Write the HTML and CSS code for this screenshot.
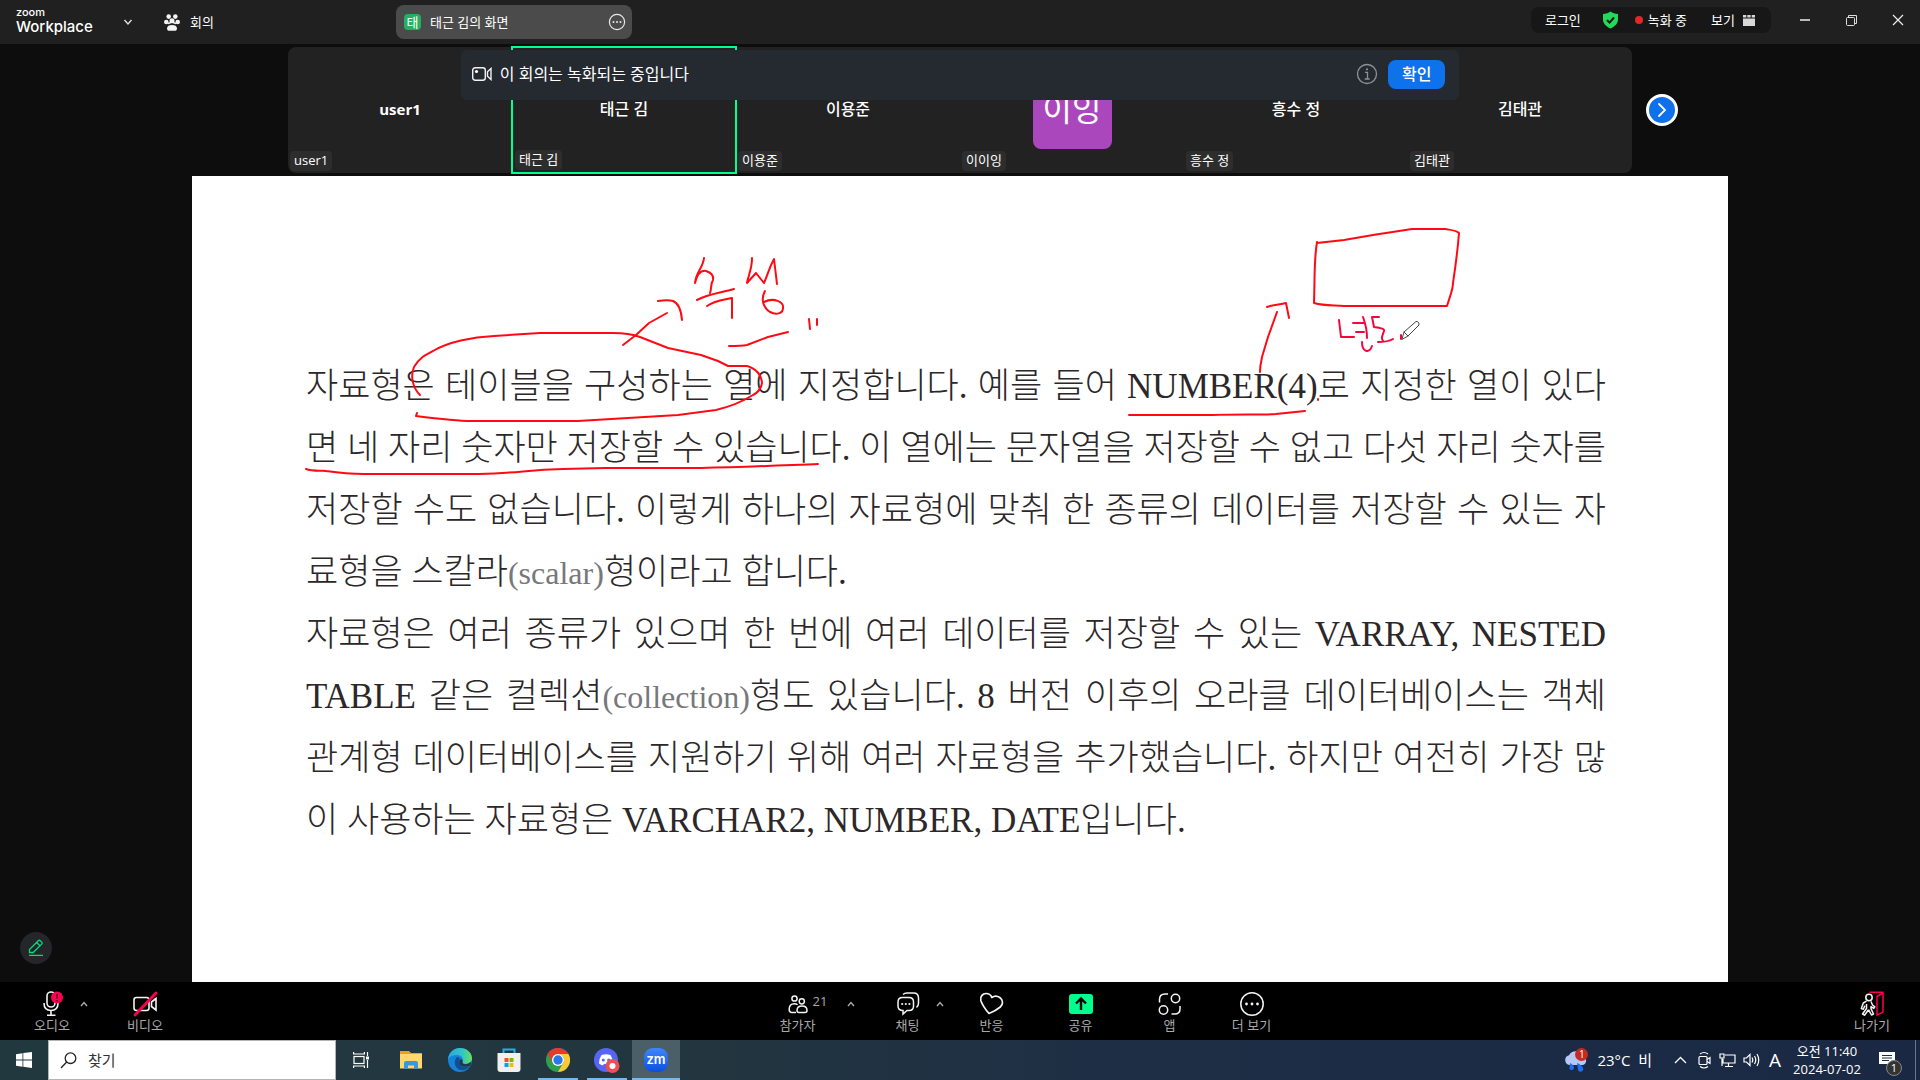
FILE: index.html
```html
<!DOCTYPE html>
<html lang="ko">
<head>
<meta charset="utf-8">
<meta name="viewport" content="width=device-width, initial-scale=1">
<title>Zoom Workplace</title>
<link rel="stylesheet" href="styles.css">
</head>
<body>
<div class="app">
  <header class="titlebar">
    <div class="brand"><span class="brand-top">zoom</span><span class="brand-name">Workplace</span></div>
    <button class="icon-btn brand-menu" aria-label="메뉴"><svg width="10" height="8" viewBox="0 0 10 8"><path d="M1.500 2l3.500 4 3.500-4" fill="none" stroke="#ddd" stroke-width="1.400"/></svg></button>
    <button class="meeting-btn">
      <svg width="16" height="17" viewBox="0 0 16 17" fill="#f4f4f4"><circle cx="4.700" cy="2.600" r="2.300"/><circle cx="11.300" cy="2.600" r="2.300"/><circle cx="2.300" cy="8" r="2.300"/><circle cx="13.700" cy="8" r="2.300"/><circle cx="8" cy="6.800" r="2.500"/><path d="M3 14.500c0-2.500 2.200-3.500 5-3.500s5 1 5 3.500c0 1.500-1 2.300-2.300 2.300H5.300C4 16.800 3 16 3 14.500z"/><path d="M4 9.500l3-1M12 9.500l-3-1" stroke="#f4f4f4" stroke-width="1.500"/></svg>
      회의
    </button>
    <div class="share-pill">
      <span class="share-badge">태</span>
      <span class="share-title">태근 김의 화면</span>
      <button class="icon-btn" aria-label="더 보기"><svg width="18" height="18" viewBox="0 0 18 18"><circle cx="9" cy="9" r="7.600" fill="none" stroke="#e8e8e8" stroke-width="1.200"/><g fill="#e8e8e8"><circle cx="5.500" cy="9" r="1"/><circle cx="9" cy="9" r="1"/><circle cx="12.500" cy="9" r="1"/></g></svg></button>
    </div>
    <div class="status-pill">
      <button class="text-btn">로그인</button>
      <svg class="shield" width="17" height="18" viewBox="0 0 17 18"><path d="M8.500 0.500c2 1.700 4.500 2.400 7.500 2.500v5.500c0 4-3 7-7.500 9C4 15.500 1 12.500 1 8.500V3c3-.1 5.500-.8 7.500-2.500z" fill="#23d959"/><path d="M5 9l2.600 2.600L12 6.500" fill="none" stroke="#171717" stroke-width="2"/></svg>
      <span class="recording"><i class="rec-dot"></i>녹화 중</span>
      <button class="text-btn view-btn">보기
        <svg width="12" height="11" viewBox="0 0 12 11" fill="#d8d8d8"><path d="M0 0h3.300v2.500H0zM4.300 0h3.300v2.500H4.300zM8.700 0H12v2.500H8.700zM0 3.500h12V11H0z"/></svg>
      </button>
    </div>
    <div class="window-btns">
      <button class="icon-btn" aria-label="최소화"><svg width="12" height="12" viewBox="0 0 12 12"><path d="M1 6h10" stroke="#bbb" stroke-width="2"/></svg></button>
      <button class="icon-btn" aria-label="이전 크기로"><svg width="13" height="13" viewBox="0 0 13 13" fill="none" stroke="#ddd"><rect x="1.500" y="3.500" width="8" height="8" rx="1"/><path d="M3.500 3V1.500h8v8H10"/></svg></button>
      <button class="icon-btn" aria-label="닫기"><svg width="12" height="12" viewBox="0 0 12 12"><path d="M1 1l10 10M11 1L1 11" stroke="#eee" stroke-width="1.200"/></svg></button>
    </div>
  </header>

  <main class="stage">
    <section class="gallery">
      <div class="strip">
        <div class="tile"><strong>user1</strong><span class="tag">user1</span></div>
        <div class="tile tile-active"><b>태근 김</b><span class="tag">태근 김</span></div>
        <div class="tile"><b>이용준</b><span class="tag">이용준</span></div>
        <div class="tile"><span class="avatar">이잉</span><span class="tag">이이잉</span></div>
        <div class="tile"><b>흥수 정</b><span class="tag">흥수 정</span></div>
        <div class="tile"><b>김태관</b><span class="tag">김태관</span></div>
      </div>
      <button class="next-btn" aria-label="다음"><svg width="10" height="16" viewBox="0 0 10 16"><path d="M2 2l6 6-6 6" fill="none" stroke="#fff" stroke-width="1.800" stroke-linecap="round"/></svg></button>
    </section>

    <div class="banner" role="status">
      <svg width="20" height="14" viewBox="0 0 20 14" fill="none" stroke="#f2f2f2" stroke-width="1.400"><rect x="0.700" y="0.700" width="12.600" height="12.600" rx="2.500"/><path d="M15.500 4.800L19 1.500v11l-3.500-3.300z"/><circle cx="4.500" cy="4.500" r="1.600" fill="#fff" stroke="none"/></svg>
      <span class="banner-text">이 회의는 녹화되는 중입니다</span>
      <button class="icon-btn" aria-label="정보"><svg width="22" height="22" viewBox="0 0 22 22" fill="none" stroke="#8d9197" stroke-width="1.300"><circle cx="11" cy="11" r="9.500"/><path d="M9 9.300h2.500V16M8.700 16h5"/><circle cx="11" cy="6.300" r="1.100" fill="#8d9197" stroke="none"/></svg></button>
      <button class="confirm">확인</button>
    </div>

    <article class="slide">
      <p>
        <span class="line">자료형은 테이블을 구성하는 열에 지정합니다. 예를 들어 NUMBER(4)로 지정한 열이 있다</span>
        <span class="line">면 네 자리 숫자만 저장할 수 있습니다. 이 열에는 문자열을 저장할 수 없고 다섯 자리 숫자를</span>
        <span class="line">저장할 수도 없습니다. 이렇게 하나의 자료형에 맞춰 한 종류의 데이터를 저장할 수 있는 자</span>
        <span class="line line-end">료형을 스칼라<small>(scalar)</small>형이라고 합니다.</span>
      </p>
      <p>
        <span class="line">자료형은 여러 종류가 있으며 한 번에 여러 데이터를 저장할 수 있는 VARRAY, NESTED</span>
        <span class="line">TABLE 같은 컬렉션<small>(collection)</small>형도 있습니다. 8 버전 이후의 오라클 데이터베이스는 객체</span>
        <span class="line">관계형 데이터베이스를 지원하기 위해 여러 자료형을 추가했습니다. 하지만 여전히 가장 많</span>
        <span class="line line-end">이 사용하는 자료형은 VARCHAR2, NUMBER, DATE입니다.</span>
      </p>
      <svg class="ink" viewBox="192 176 1536 806" preserveAspectRatio="xMidYMin meet" aria-hidden="true">
        <path d="M420 395C413 388 410 377 414 367C420 357 427 354 433 351C448 342 472 337 494 336L540 333H613C622 333 632 334 640 337L668 348L701 355L718 361L728 366H747C754 368 761 373 762 383C761 390 757 393 753 395C740 403 729 407 716 410L678 415L578 421H471C457 421 440 419 416 416L417 413"/>
        <path d="M623 345L636 335L649 323L667 313M658 301C664 300 670 300 673 301C678 303 681 308 682 320"/>
        <path d="M704 258C703 268 696 272 695 283C697 275 701 270 706 271C712 273 714 276 713 280C710 285 712 288 710 293M697 300C708 294 720 293 734 289M707 306C716 300 724 300 732 298V318"/>
        <path d="M752 258C752 270 748 276 747 283L756 273L764 283C768 274 769 268 774 259L777 284M765 291C760 300 764 308 770 312C776 315 783 314 783 308C784 302 774 297 764 302"/>
        <path d="M729 346C737 346 742 346 747 345L768 337L788 332M809 319L810 329M817 319V325"/>
        <path d="M306 469C314 472 324 470 326 471C340 473 350 474 364 474H479C520 473 525 470 563 469L605 468H701C750 467 790 465 818 464"/>
        <path d="M1317 242C1314 260 1315 270 1314 303C1325 306 1333 305 1344 306H1447C1449 299 1453 290 1453 283C1456 263 1458 246 1459 233C1456 230 1450 230 1445 229H1412L1373 235L1344 240L1317 243"/>
        <path d="M1260 372C1260 363 1262 360 1262 357L1268 337L1277 312M1267 307C1275 304 1280 305 1286 303L1289 318"/>
        <path d="M1129 415H1212C1240 414 1258 415 1276 414L1305 411M1318 399V400"/>
        <path class="ink-pink" d="M1339 320L1341 337H1354M1353 323H1364M1356 332H1364M1363 317C1366 325 1367 330 1367 338M1362 342C1362 352 1369 354 1372 346M1379 317H1372L1374 327C1381 328 1385 329 1384 331C1382 337 1381 338 1383 341M1378 342C1384 342 1388 342 1393 339M1401 335V339"/>
        <path class="cursor" d="M1402 339L1404 332L1416 321.500Q1419 321 1419 325L1408 336ZM1404 332L1408 336"/>
      </svg>
    </article>

    <button class="annotate" aria-label="주석"><svg width="16" height="18" viewBox="0 0 16 18" fill="none" stroke="#0bd97e" stroke-width="1.300"><path d="M1.500 10.500l8.800-8.800q1-.9 2 0l1.400 1.400q.9 1 0 2L5.200 13.500H1.500zM8.700 3.500l3.300 3.300M1 16.300h14"/></svg></button>
  </main>

  <nav class="toolbar">
    <div class="tools tools-left">
      <button class="tool"><svg width="22" height="26" viewBox="0 0 22 26" fill="none" stroke="#f4f4f4" stroke-width="1.600"><rect x="6" y="1" width="8" height="15" rx="4"/><path d="M3 12c0 5 3 7.500 7 7.500s7-2.500 7-7.500M10 19.500V24M6 24.200h8.500"/><circle cx="16" cy="6.500" r="6" fill="#ff0050" stroke="none"/><path d="M16 3v4.500M16 9v1.500" stroke="#40001a" stroke-width="1.500"/></svg>오디오</button>
      <button class="caret" aria-label="오디오 옵션"><svg width="8" height="6" viewBox="0 0 8 6"><path d="M1 5l3-3.500L7 5" fill="none" stroke="#aaa" stroke-width="1.400"/></svg></button>
      <button class="tool tool-video"><svg width="26" height="26" viewBox="0 0 26 26" fill="none" stroke="#f4f4f4" stroke-width="1.600"><rect x="2" y="6.500" width="15" height="13" rx="2.500"/><path d="M24 7.500v11.500l-4.500-3.500v-4.500z"/><path d="M3 24L24 2" stroke="#ff0050" stroke-width="2.800" stroke-linecap="round"/></svg>비디오</button>
    </div>
    <div class="tools tools-mid">
      <button class="tool"><svg width="20" height="26" viewBox="0 0 20 26" fill="none" stroke="#f4f4f4" stroke-width="1.500"><circle cx="6.500" cy="7.500" r="2.600"/><circle cx="13.800" cy="10.300" r="2.600"/><path d="M8 21.500H3.500C1.500 21.500 1.200 20 1.200 18c0-3.500 2-5.300 5-5.300 1.500 0 2.600.3 3.400 1M14 15c3.500 0 5 2 5 4.500 0 1.500-.7 2-2 2h-6c-1.300 0-2-.5-2-2C9 17 10.500 15 14 15z"/></svg>참가자<span class="count">21</span></button>
      <button class="caret caret-far" aria-label="참가자 옵션"><svg width="8" height="6" viewBox="0 0 8 6"><path d="M1 5l3-3.500L7 5" fill="none" stroke="#aaa" stroke-width="1.400"/></svg></button>
      <button class="tool tool-chat"><svg width="24" height="26" viewBox="0 0 24 26" fill="none" stroke="#f4f4f4" stroke-width="1.500"><path d="M7 3.500Q8.500 2 11 2h6.500Q22.500 2 22.500 7v5q0 3-2 4.500"/><path d="M6.500 6.500h6.500q4.500 0 4.500 4.500v4q0 4.500-4.500 4.500h-2l-4 3.500v-3.500q-5 0-5-4.500v-4q0-4.500 4.500-4.500z"/><g fill="#f4f4f4" stroke="none"><circle cx="6.200" cy="13" r="1.100"/><circle cx="9.800" cy="13" r="1.100"/><circle cx="13.400" cy="13" r="1.100"/></g></svg>채팅</button>
      <button class="caret" aria-label="채팅 옵션"><svg width="8" height="6" viewBox="0 0 8 6"><path d="M1 5l3-3.500L7 5" fill="none" stroke="#aaa" stroke-width="1.400"/></svg></button>
      <button class="tool tool-react"><svg width="26" height="26" viewBox="0 0 26 26" fill="none" stroke="#f4f4f4" stroke-width="1.700" stroke-linejoin="round"><path d="M10 22.500C6 18 3 13 1.800 9.500.8 5 4 2.500 7 2.500c3.300 0 5 1.500 5.800 4 2.500-1.700 5.500-1.700 8 0 3.500 2.500 3.500 7 .5 9.500-3 2.500-7 4.800-11.300 6.500z"/></svg>반응</button>
      <button class="tool tool-gap"><svg width="24" height="26" viewBox="0 0 24 26"><rect y="3" width="24" height="20" rx="3" fill="#00ff8c"/><path d="M12 19V8M7 12.500L12 7.500l5 5" fill="none" stroke="#000" stroke-width="2.400"/></svg>공유</button>
      <button class="tool tool-gap"><svg width="24" height="26" viewBox="0 0 24 26" fill="none" stroke="#f4f4f4" stroke-width="1.500"><circle cx="17.500" cy="7.500" r="4.200"/><circle cx="5.500" cy="19" r="4.200"/><path d="M1.500 11.500V8.500Q1.500 3 7 3h3M22 15v3q0 5-5.500 5h-3"/></svg>앱</button>
      <button class="tool tool-more"><svg width="26" height="26" viewBox="0 0 26 26"><circle cx="13" cy="13" r="11.200" fill="none" stroke="#f4f4f4" stroke-width="1.500"/><g fill="#f4f4f4"><circle cx="7.500" cy="13" r="1.400"/><circle cx="13" cy="13" r="1.400"/><circle cx="18.500" cy="13" r="1.400"/></g></svg>더 보기</button>
    </div>
    <div class="tools">
      <button class="tool"><svg width="24" height="26" viewBox="0 0 24 26" fill="none" stroke="#f4f4f4" stroke-width="1.500" stroke-linejoin="round"><circle cx="9" cy="6.500" r="3.200"/><path d="M6.500 10.200L3.300 12 1.300 17.500l2 .8 1.500-3.500M6.500 13v4.500L2.500 23l2 1.200 4-5.500M11 10.500l1.500 3.500 2.300 1.800-1 1.600-2.800-1.800v2L13.500 23l-2 1-3-5.300"/><path d="M9.500 1.200H23v20l-6 3V5.500l6-3.500" stroke="#ff0050"/></svg>나가기</button>
    </div>
  </nav>

  <footer class="taskbar">
    <button class="task start" aria-label="시작"><svg width="16" height="16" viewBox="0 0 16 16" fill="#fff"><path d="M0 2.200l6.500-1v6.300H0zM7.300 1L16 0v7.500H7.300zM0 8.400h6.500v6.400l-6.500-1zM7.300 8.400H16V16l-8.700-1.200z"/></svg></button>
    <label class="search"><svg width="17" height="17" viewBox="0 0 17 17" fill="none" stroke="#222" stroke-width="1.300"><circle cx="10.500" cy="6.200" r="5.300"/><path d="M6.700 10L1 16"/></svg><input type="text" aria-label="찾기" placeholder="찾기"></label>
    <button class="task task-view" aria-label="작업 보기"><svg width="17" height="16" viewBox="0 0 17 16" fill="none" stroke="#fff" stroke-width="1.200"><rect x="1" y="4.500" width="10" height="7"/><path d="M.6 0v2h10.800V0M.6 16v-2h10.800v2M14.500 0v4M14.500 8v8"/><path d="M13 4.500h3v3h-3z" fill="#fff" stroke="none"/></svg></button>
    <div class="pinned">
      <button class="task" aria-label="파일 탐색기"><svg width="22" height="20" viewBox="0 0 22 20"><path d="M0 1h9l2 2h11v15H0z" fill="#e8a317"/><path d="M0 4h22v14.500H0z" fill="#ffd869"/><path d="M4 19v-6q0-2 2-2h10q2 0 2 2v6h-4v-3.500H8V19z" fill="#3a96dd"/></svg></button>
      <button class="task" aria-label="Edge"><svg width="24" height="24" viewBox="0 0 24 24"><defs><linearGradient id="e1" x1="0" x2="1"><stop stop-color="#2aa5e0"/><stop offset=".6" stop-color="#32c5c7"/><stop offset="1" stop-color="#6be052"/></linearGradient></defs><circle cx="12" cy="12" r="12" fill="#1583d8"/><path d="M0 11C1 4 6 0 12 0c7 0 12 5 12 10 0 4-3 6-6 6-2 0-4-.7-3.500-2C16 10 13 7 9 7 5 7 2 8.500 0 11z" fill="url(#e1)"/><path d="M9 9c-3 3-3 9 1 12 4 2.500 9 1 12-3-5 2.500-12 0-10.500-5 .5-2 .3-4-2.500-4z" fill="#0f4f93"/><path d="M14.500 14c-.5 1.500 1.500 2.500 4 2 2-.4 3.500-1.300 4.700-2.500l-.7 4c-3 2-9 1.500-11-1.500-.7-2 .5-4.500 1.500-5 1.300.5 2 1.500 1.500 3z" fill="#22373f"/></svg></button>
      <button class="task" aria-label="Microsoft Store"><svg width="24" height="24" viewBox="0 0 24 24"><path d="M6.500 7V1.500h11V7" fill="none" stroke="#22b1e6" stroke-width="2"/><path d="M.5 5h23v16q0 3-3 3h-17q-3 0-3-3z" fill="#f0f0f0"/><path d="M7.500 10h4v4h-4z" fill="#f25022"/><path d="M12.500 10h4v4h-4z" fill="#7fba00"/><path d="M7.500 15h4v4h-4z" fill="#00a4ef"/><path d="M12.500 15h4v4h-4z" fill="#ffb900"/></svg></button>
      <button class="task running" aria-label="Chrome"><svg width="24" height="24" viewBox="0 0 24 24"><circle cx="12" cy="12" r="12" fill="#2da04e"/><path d="M1.600 6A12 12 0 0 1 22.400 6H12a6 6 0 0 0-5.200 9z" fill="#e33b2e"/><path d="M22.400 6A12 12 0 0 1 12 24l5.200-9A6 6 0 0 0 12 6z" fill="#fcc934"/><circle cx="12" cy="12" r="6" fill="#fff"/><circle cx="12" cy="12" r="4.700" fill="#2878eb"/></svg></button>
      <button class="task running" aria-label="Discord"><svg width="26" height="26" viewBox="0 0 26 26"><circle cx="12" cy="13" r="12" fill="#5865f2"/><path d="M7.500 8Q12 6.500 16.500 8q2.500 3.500 2.500 8.500-2 1.500-4 2l-1-1.700q-2 .5-4 0l-1 1.700q-2-.5-4-2Q5 11.500 7.500 8z" fill="#fff"/><circle cx="9.300" cy="13" r="1.500" fill="#5865f2"/><circle cx="14.600" cy="13" r="1.500" fill="#5865f2"/><circle cx="18.500" cy="19" r="7" fill="#ed4f55"/><circle cx="18.500" cy="19" r="3" fill="#fff"/></svg></button>
      <button class="task running task-current"><span class="zm">zm</span></button>
    </div>
    <div class="tray">
      <button class="tray-btn weather"><svg width="25" height="24" viewBox="0 0 25 24"><path d="M5.500 17a5 5 0 0 1-.5-9.800A7.500 7.500 0 0 1 18.500 8 4.700 4.700 0 0 1 19 17z" fill="#b5c8f8"/><path d="M6 15q4 2 4 5a2.500 2.500 0 0 1-4.500 1zM13 15q5 2 6 5a2.500 2.500 0 0 1-5 2z" fill="#1f6df0"/><circle cx="17.500" cy="6.500" r="6.500" fill="#c62b20"/></svg><span class="weather-count">1</span>23°C&nbsp; 비</button>
      <button class="tray-btn tray-up" aria-label="숨겨진 아이콘"><svg width="13" height="8" viewBox="0 0 13 8"><path d="M1 7l5.500-5.500L12 7" fill="none" stroke="#fff" stroke-width="1.300"/></svg></button>
      <svg class="tray-icon" width="14" height="18" viewBox="0 0 14 18" fill="none" stroke="#fff" stroke-width="1.200"><rect x="1" y="5.500" width="8" height="8" rx="1"/><path d="M9 8.500l3-2v6l-3-2M2 3q4-3 8 0M2 15.500q4 3 8 0"/></svg>
      <svg class="tray-icon" width="17" height="16" viewBox="0 0 17 16" fill="none" stroke="#fff" stroke-width="1.200"><path d="M6 3h10v8H4V7M1 2h4v4H1zM3 6v8M9.500 11v3M6 14.500h8"/></svg>
      <svg class="tray-icon" width="17" height="14" viewBox="0 0 17 14" fill="none" stroke="#fff" stroke-width="1.200"><path d="M1 5h2.500L7 1.500v11L3.500 9H1zM9 4.500q1.500 2.500 0 5M11.500 3q2.500 4 0 8M14 1q3.500 6 0 12"/></svg>
      <span class="ime">A</span>
      <div class="clock"><span>오전 11:40</span><span>2024-07-02</span></div>
      <button class="tray-btn notice" aria-label="알림"><svg width="16" height="16" viewBox="0 0 16 16"><path d="M0 0h16v12h-4v3.500L8.500 12H0z" fill="#fff"/><path d="M3 3.500h10M3 6h10M3 8.500h7" stroke="#1b2a45"/></svg><span class="notice-count">1</span></button>
    </div>
  </footer>
</div>
</body>
</html>
```
FILE: styles.css
```css
* { box-sizing: border-box; }

body {
  margin: 0;
  background: #0d0d0d;
  color: #fff;
  font: 13px/16px "Open Sans", "Noto Sans CJK KR", sans-serif;
}

button {
  margin: 0;
  padding: 0;
  border: 0;
  background: none;
  color: inherit;
  font: inherit;
}

svg { display: block; flex: none; }

.app {
  display: flex;
  flex-direction: column;
  min-height: 100vh;
}

.icon-btn { display: flex; align-items: center; justify-content: center; }

/* Title bar */
.titlebar {
  display: flex;
  align-items: center;
  height: 44px;
  padding: 0 16px;
  background: #202020;
}

.brand {
  display: flex;
  flex-direction: column;
  width: 90px;
  margin-top: -4px;
  font-family: Inter, sans-serif;
}
.brand-top { font-size: 11px; line-height: 14px; font-weight: 500; }
.brand-name { font-size: 15px; line-height: 16px; font-weight: 500; }
.brand-menu { width: 44px; height: 24px; }

.meeting-btn {
  display: flex;
  align-items: center;
  gap: 10px;
  margin-left: 14px;
}

.share-pill {
  display: flex;
  align-items: center;
  width: 236px;
  height: 34px;
  margin-left: 182px;
  padding: 0 6px 0 8px;
  border-radius: 8px;
  background: #4b4b4b;
}
.share-badge {
  width: 17px;
  border-radius: 4px;
  background: #27ae60;
  text-align: center;
}
.share-title { flex: 1; margin-left: 9px; }

.status-pill {
  display: flex;
  align-items: center;
  height: 26px;
  margin: -4px 0 0 auto;
  padding: 0 16px 0 14px;
  border-radius: 8px;
  background: #171717;
}
.text-btn { display: flex; align-items: center; gap: 8px; }
.shield { margin-left: 21px; }
.recording { display: flex; align-items: center; gap: 5px; margin: 0 24px 0 16px; }
.rec-dot { width: 8px; height: 8px; border-radius: 50%; background: #e02828; }

.window-btns { display: flex; gap: 34px; margin: -4px 0 0 28px; }

/* Participant strip */
.stage {
  position: relative;
  flex: 1;
  padding-top: 3px;
  display: flex;
  flex-direction: column;
}

.gallery {
  display: grid;
  grid-template-columns: 1fr 70% 1fr;
  align-items: center;
  margin-bottom: 3px;
}
.strip {
  grid-column: 2;
  display: grid;
  grid-template-columns: repeat(6, 1fr);
  height: 126px;
  border-radius: 8px;
  background: #222;
}
.tile {
  position: relative;
  display: flex;
  align-items: center;
  justify-content: center;
  padding-bottom: 2px;
  font-size: 15px;
}
.tile b { font-size: 16px; font-weight: 500; }
.tile-active { margin: -1px; border: 2px solid #00ff8c; }
.tag {
  position: absolute;
  left: 2px;
  bottom: 2px;
  padding: 1px 4px 3px;
  border-radius: 4px;
  background: #2d2d2d;
  font-size: 13px;
}
.avatar {
  width: 79px;
  height: 80px;
  border-radius: 8px;
  background: #ab47bc;
  font-size: 32px;
  line-height: 80px;
  text-align: center;
}
.next-btn {
  display: flex;
  align-items: center;
  justify-content: center;
  width: 32px;
  height: 32px;
  margin-left: 14px;
  border: 3px solid #fff;
  border-radius: 50%;
  background: #0e71eb;
}

.banner {
  position: absolute;
  z-index: 2;
  top: 6px;
  left: 24%;
  right: 24%;
  display: flex;
  align-items: center;
  height: 50px;
  padding: 0 14px 2px 11px;
  border-radius: 6px;
  background: #252a31;
  font-size: 16px;
}
.banner-text { flex: 1; margin-left: 8px; }
.confirm {
  width: 57px;
  height: 29px;
  margin-left: 10px;
  border-radius: 8px;
  background: #0e72ed;
  font-weight: 500;
}

/* Shared slide */
.slide {
  position: relative;
  flex: 1;
  width: 80%;
  margin: 0 auto;
  padding: 180px 122px 0 114px;
  background: #fff;
  color: #2c2729;
  font: 300 35px/62px "Liberation Serif", "Noto Sans CJK KR", serif;
}
.slide p { margin: 0; }
.line {
  display: block;
  white-space: nowrap;
  text-align: justify;
  text-align-last: justify;
}
.line-end { text-align-last: left; }
.slide small { color: #77787b; font-size: 32px; }
.ink {
  position: absolute;
  top: 0;
  left: 0;
  width: 100%;
  fill: none;
  stroke: #ff0a14;
  stroke-width: 2;
  stroke-linecap: round;
  stroke-linejoin: round;
}
.ink-pink { stroke: #f5073c; }
.cursor { fill: #fff; stroke: #444; stroke-width: 1; }

.annotate {
  position: absolute;
  left: 20px;
  bottom: 18px;
  display: flex;
  align-items: center;
  justify-content: center;
  width: 32px;
  height: 32px;
  border-radius: 50%;
  background: #25262a;
}

/* Meeting controls */
.toolbar {
  display: flex;
  justify-content: space-between;
  height: 58px;
  padding: 0 26px 0 30px;
  background: #000;
  color: #a8a8a8;
}
.tools { display: flex; padding-top: 9px; }
.tools-left { padding-right: 32px; }
.tool {
  position: relative;
  display: flex;
  flex-direction: column;
  align-items: center;
  width: 44px;
  height: 42px;
  white-space: nowrap;
}
.caret {
  display: flex;
  justify-content: center;
  width: 20px;
  height: 26px;
  padding-top: 10px;
}
.tool-video { margin-left: 29px; }
.caret-far { margin-left: 21px; }
.tool-chat { margin-left: 25px; }
.tool-react { margin-left: 20px; }
.tool-gap { margin-left: 45px; }
.tool-more { margin-left: 38px; }
.count { position: absolute; top: 2px; left: 37px; }

/* Taskbar */
.taskbar {
  display: flex;
  height: 40px;
  background: linear-gradient(90deg, #22383f, #22363f 35%, #1d2e45 60%, #1a2844);
}
.task {
  display: flex;
  align-items: center;
  justify-content: center;
  width: 48px;
  height: 40px;
}
.search {
  display: flex;
  align-items: center;
  gap: 11px;
  width: 288px;
  padding: 0 11px;
  border: 1px solid #b4b4b4;
  background: #fff;
}
.search input {
  flex: 1;
  min-width: 0;
  padding: 0;
  border: 0;
  outline: 0;
  background: none;
  font: 15px/20px "Open Sans", "Noto Sans CJK KR", sans-serif;
}
.search input::placeholder { color: #333; opacity: 1; }
.task-view { width: 50px; }
.pinned { display: flex; gap: 1px; margin-left: 1px; }
.running { background: linear-gradient(#76b9ed, #76b9ed) center bottom / 40px 2px no-repeat; }
.task-current { background-color: #4b5f68; background-size: 48px 2px; }
.zm {
  width: 24px;
  height: 24px;
  border-radius: 9px;
  background: linear-gradient(#3f86ff, #0b4fe0);
  font: 600 13px/22px Inter, sans-serif;
  text-align: center;
}

.tray {
  display: flex;
  align-items: center;
  margin-left: auto;
  padding-right: 4px;
}
.tray-btn { position: relative; display: flex; align-items: center; }
.weather { gap: 8px; font-size: 15px; }
.weather-count {
  position: absolute;
  top: -2px;
  left: 11px;
  width: 13px;
  font-size: 10px;
  text-align: center;
}
.tray-up { margin: 0 11px 0 22px; }
.tray-icon { margin-right: 7px; }
.ime { width: 16px; font-size: 19px; text-align: center; }
.clock {
  display: flex;
  flex-direction: column;
  width: 88px;
  margin-right: 8px;
  text-align: center;
  line-height: 18px;
}
.notice {
  width: 37px;
  height: 40px;
  border-right: 1px solid #6d7788;
}
.notice-count {
  position: absolute;
  top: 20px;
  left: 7px;
  width: 16px;
  height: 16px;
  border: 1px solid #888;
  border-radius: 50%;
  background: #333;
  font-size: 11px;
  line-height: 14px;
  text-align: center;
}
```
